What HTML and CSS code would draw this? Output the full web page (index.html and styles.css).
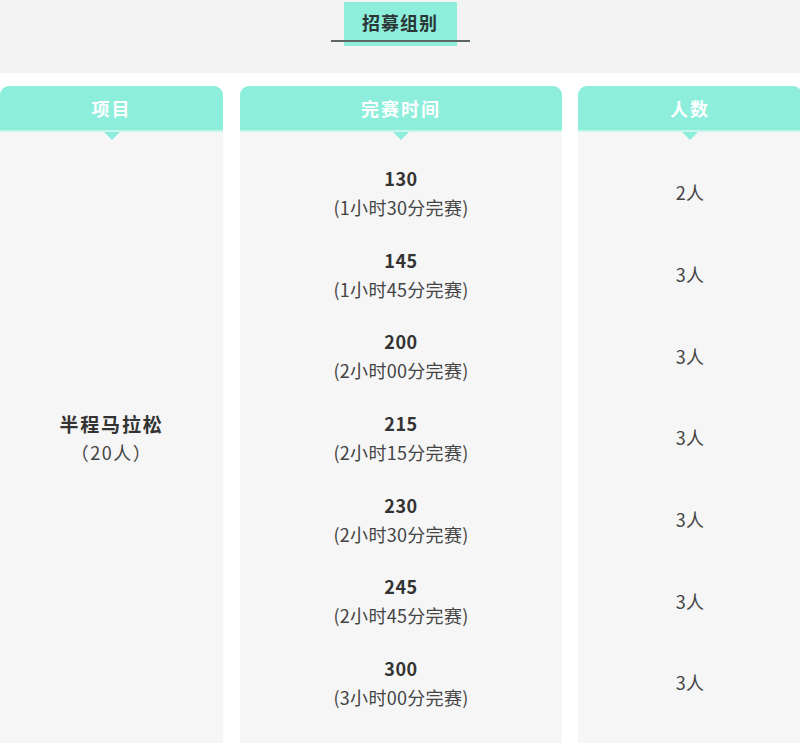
FILE: index.html
```html
<!DOCTYPE html>
<html lang="zh">
<head>
<meta charset="utf-8">
<link rel="stylesheet" href="styles.css">
</head>
<body>
<div class="banner">
  <div class="title-wrap">
    <div class="title">招募组别</div>
  </div>
</div>
<div class="table">
  <div class="col col-item">
    <div class="head">项目</div>
    <div class="body body-center">
      <div class="name">半程马拉松</div>
      <div class="sub sub-wide">（20人）</div>
    </div>
  </div>
  <div class="col col-time">
    <div class="head">完赛时间</div>
    <div class="body">
      <div class="row"><div class="strong">130</div><div class="sub">(1小时30分完赛)</div></div>
      <div class="row"><div class="strong">145</div><div class="sub">(1小时45分完赛)</div></div>
      <div class="row"><div class="strong">200</div><div class="sub">(2小时00分完赛)</div></div>
      <div class="row"><div class="strong">215</div><div class="sub">(2小时15分完赛)</div></div>
      <div class="row"><div class="strong">230</div><div class="sub">(2小时30分完赛)</div></div>
      <div class="row"><div class="strong">245</div><div class="sub">(2小时45分完赛)</div></div>
      <div class="row"><div class="strong">300</div><div class="sub">(3小时00分完赛)</div></div>
    </div>
  </div>
  <div class="col col-num">
    <div class="head">人数</div>
    <div class="body">
      <div class="row"><div class="sub">2人</div></div>
      <div class="row"><div class="sub">3人</div></div>
      <div class="row"><div class="sub">3人</div></div>
      <div class="row"><div class="sub">3人</div></div>
      <div class="row"><div class="sub">3人</div></div>
      <div class="row"><div class="sub">3人</div></div>
      <div class="row"><div class="sub">3人</div></div>
    </div>
  </div>
</div>
</body>
</html>
```
FILE: styles.css
```css
html, body {
  margin: 0;
  padding: 0;
  background: #ffffff;
  overflow: hidden;
}
body {
  width: 800px;
  font-family: "Noto Sans CJK SC", "Noto Sans", sans-serif;
  color: #333;
}
.banner {
  height: 73px;
  background: #f2f3f2;
  display: flex;
  justify-content: center;
}
.title-wrap {
  position: relative;
  padding: 2px 13px 0 13px;
  height: 44px;
}
.title {
  width: 113px;
  height: 44px;
  background: #8deedc;
  color: #2b3636;
  font-weight: 700;
  font-size: 18px;
  letter-spacing: 1px;
  display: flex;
  align-items: center;
  justify-content: center;
  padding-bottom: 4px;
  box-sizing: border-box;
}
.title-wrap::after {
  content: "";
  position: absolute;
  left: 0;
  right: 0;
  top: 40px;
  height: 2px;
  background: #5d6664;
}
.table {
  display: flex;
  margin-top: 13px;
  width: 802px;
}
.col {
  display: flex;
  flex-direction: column;
  background: #f6f6f6;
  border-radius: 9px 9px 0 0;
}
.col-item { width: 223px; margin-right: 17px; }
.col-time { width: 322px; margin-right: 16px; }
.col-num { width: 224px; }
.head {
  position: relative;
  height: 44px;
  background: #8deedc;
  border-radius: 9px 9px 0 0;
  border-bottom: 2px solid #c6f5eb;
  color: #ffffff;
  font-weight: 700;
  font-size: 18px;
  letter-spacing: 2px;
  display: flex;
  align-items: center;
  justify-content: center;
}
.head::after {
  content: "";
  position: absolute;
  left: 50%;
  bottom: -10px;
  margin-left: -8px;
  border-left: 8px solid transparent;
  border-right: 8px solid transparent;
  border-top: 8px solid #8deedc;
}
.body {
  padding: 20px 0 20px;
  flex: 1;
  display: flex;
  flex-direction: column;
}
.body-center {
  justify-content: center;
  align-items: center;
  padding-top: 20px;
}
.row {
  height: 81.7px;
  display: flex;
  flex-direction: column;
  align-items: center;
  justify-content: center;
}
.strong {
  font-weight: 700;
  font-size: 18px;
  line-height: 29px;
  letter-spacing: 0.5px;
  color: #333;
}
.name {
  font-weight: 700;
  font-size: 19px;
  line-height: 29px;
  letter-spacing: 1.8px;
  color: #333;
}
.sub {
  font-size: 18px;
  line-height: 29px;
  letter-spacing: 0.3px;
  color: #444;
}
.sub-wide {
  letter-spacing: 1.5px;
}
```
